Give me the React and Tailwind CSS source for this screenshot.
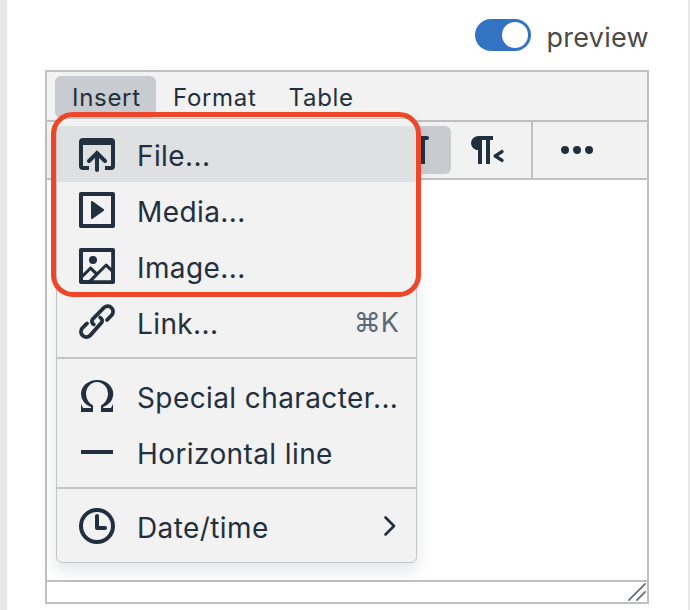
import React from "react";

const textFont = "font-['Inter','Liberation_Sans',sans-serif]";

function Icon({ children }) {
  return (
    <svg viewBox="0 0 24 24" className="w-12 h-12 shrink-0 fill-[#222f3e]">
      {children}
    </svg>
  );
}

const items = [
  {
    label: "File...",
    active: true,
    icon: (
      <>
        <path d="M5 4h14a2 2 0 0 1 2 2v12a2 2 0 0 1-2 2h-3v-2h3V7.5H5V18h3v2H5a2 2 0 0 1-2-2V6a2 2 0 0 1 2-2z" />
        <path d="M12 20V11.5M8 15.5l4-4 4 4" fill="none" stroke="#222f3e" strokeWidth="2" strokeLinecap="round" />
      </>
    ),
  },
  {
    label: "Media...",
    icon: (
      <path d="M4 3h16a1 1 0 0 1 1 1v16a1 1 0 0 1-1 1H4a1 1 0 0 1-1-1V4a1 1 0 0 1 1-1zm1 2v14h14V5H5zm4.8 2.6l5.6 4a.5.5 0 0 1 0 .8l-5.6 4A.5.5 0 0 1 9 16V8a.5.5 0 0 1 .8-.4z" />
    ),
  },
  {
    label: "Image...",
    icon: (
      <path d="M5 15.7l3.3-3.2c.3-.3.7-.3 1 0L12 15l4.1-4c.3-.4.8-.4 1 0l2 1.9V5H5v10.7zM5 18V19h3l2.8-2.9-2-2L5 17.9zm14-3l-2.5-2.4-6.4 6.5H19v-4zM4 3h16c.6 0 1 .4 1 1v16c0 .6-.4 1-1 1H4a1 1 0 0 1-1-1V4c0-.6.4-1 1-1zm6 8a2 2 0 1 0 0-4 2 2 0 0 0 0 4z" />
    ),
  },
  {
    label: "Link...",
    shortcut: "⌘K",
    icon: (
      <path
        d="M10.4 13.2a1.7 1.7 0 0 1-.6-2.6L15.6 4.7a2.7 2.7 0 0 1 3.8 3.8L17 11M13.6 9.8a1.7 1.7 0 0 1 .6 2.6L8.4 18.9a2.7 2.7 0 0 1-3.8-3.8L7 12.7"
        fill="none"
        stroke="#222f3e"
        strokeWidth="1.9"
        strokeLinecap="round"
      />
    ),
  },
  { divider: true },
  {
    label: "Special character...",
    icon: (
      <path d="M15 18h4l1-2v4h-6v-3.3l1.4-1a6 6 0 0 0 1.8-2.9 6.3 6.3 0 0 0-.1-4.1 5.8 5.8 0 0 0-3-3.2c-.6-.3-1.3-.5-2.1-.5a5.1 5.1 0 0 0-3.9 1.8 6.3 6.3 0 0 0-1.3 6 6.2 6.2 0 0 0 1.8 3l1.4.9V20H4v-4l1 2h4v-.5l-2-1L5.4 15A6.5 6.5 0 0 1 4 11c0-1 .2-1.9.6-2.7A7 7 0 0 1 6.3 6C7.1 5.4 8 5 9 4.5c1-.3 2-.5 3.1-.5a8.8 8.8 0 0 1 5.7 2 7 7 0 0 1 1.7 2.3 6 6 0 0 1 .2 4.8c-.2.7-.6 1.3-1 1.9a7.6 7.6 0 0 1-3.6 2.5v.5z" />
    ),
  },
  {
    label: "Horizontal line",
    icon: <path d="M4 11h16v2H4z" />,
  },
  { divider: true },
  {
    label: "Date/time",
    chevron: true,
    icon: (
      <>
        <path d="M12 19a7 7 0 1 0 0-14 7 7 0 0 0 0 14zm0 2a9 9 0 1 1 0-18 9 9 0 0 1 0 18z" />
        <path d="M16 12h-3V7c0-.6-.4-1-1-1a1 1 0 0 0-1 1v6c0 .6.4 1 1 1h4c.6 0 1-.4 1-1s-.4-1-1-1z" />
      </>
    ),
  },
];

function InsertMenu() {
  return (
    <div className="absolute left-[9px] top-[46px] w-[361px] bg-[#f2f2f2] border border-[#c4c4c4] rounded-[6px] pt-[7px] pb-[8px] shadow-[0_8px_16px_rgba(34,47,62,0.12)]">
      {items.map((item, idx) =>
        item.divider ? (
          <div key={idx} className="h-[2px] bg-[#c4c4c4] mt-[7px] mb-[9px]" />
        ) : (
          <div
            key={idx}
            className={`h-14 pl-4 pr-4 flex items-center ${item.active ? "bg-[#dee0e2]" : ""}`}
          >
            <Icon>{item.icon}</Icon>
            <span className="ml-4 pt-[3px] flex-1 text-[28px] tracking-[0.4px] whitespace-nowrap">{item.label}</span>
            {item.shortcut && <span className="pt-[3px] mr-[1px] text-[27px] text-[#5d6978]">{item.shortcut}</span>}
            {item.chevron && (
              <svg viewBox="0 0 14 22" className="w-[14px] h-[22px] mr-[3px]">
                <path d="M2.5 2.5l8.5 8.5-8.5 8.5" fill="none" stroke="#222f3e" strokeWidth="2.6" strokeLinecap="round" strokeLinejoin="round" />
              </svg>
            )}
          </div>
        )
      )}
    </div>
  );
}

export default function App() {
  return (
    <div className={`w-[690px] h-[610px] bg-white border-l-[7px] border-r-[2px] border-[#e8e8e8] overflow-hidden text-[#222f3e] ${textFont}`}>
      {/* preview switch */}
      <div className="h-[70px] pr-[39px] flex items-center justify-end gap-[15px]">
        <div className="w-14 h-8 rounded-full bg-[#3273c4] flex items-center justify-end pr-[3px]">
          <div className="w-[26px] h-[26px] rounded-full bg-white" />
        </div>
        <span className="pt-[6px] text-[27px] text-[#4a4a4a] tracking-[0.3px]">preview</span>
      </div>

      {/* editor */}
      <div className="relative ml-[38px] w-[604px] h-[534px] border-2 border-[#c0c0c0] flex flex-col">
        <div className="h-12 shrink-0 bg-[#f2f2f2] pl-2 pt-1 flex text-[24px] tracking-[0.7px]">
          <div className="h-[42px] w-[101px] pl-[17px] pt-[2px] rounded-[6px] bg-[#c8cbcf] flex items-center">Insert</div>
          <div className="h-[42px] ml-[17px] pt-[2px] flex items-center">Format</div>
          <div className="h-[42px] ml-[32px] pt-[2px] flex items-center">Table</div>
        </div>

        <div className="h-[60px] shrink-0 bg-[#f2f2f2] border-y-2 border-[#c0c0c0] flex">
          <div className="flex-1 flex justify-end items-center gap-[1px] pr-[11px] border-r-2 border-[#c0c0c0]">
            <div className="w-[68px] h-12 rounded-[6px] bg-[#c8cbcf] flex items-center justify-center">
              <Icon>
                <path d="M10 5h7a1 1 0 0 1 0 2h-1v12h-2V7h-2v12h-2v-7c-.5 0-1 0-1.4-.3A3.4 3.4 0 0 1 6.8 10a3.3 3.3 0 0 1 0-2.8 3.4 3.4 0 0 1 1.8-1.8L10 5z" />
              </Icon>
            </div>
            <div className="w-[68px] h-12 flex items-center justify-center">
              <Icon>
                <path d="M8 5h7.5v2H14v12h-2V7h-2v12H8v-7c-.5 0-1 0-1.4-.3A3.4 3.4 0 0 1 4.8 10a3.3 3.3 0 0 1 0-2.8 3.4 3.4 0 0 1 1.8-1.8L8 5z" />
                <path d="M20 12.8l-3.4 2.2 3.4 2.2" fill="none" stroke="#222f3e" strokeWidth="1.7" strokeLinecap="round" strokeLinejoin="round" />
              </Icon>
            </div>
          </div>
          <div className="w-[114px] pl-[20px] flex items-center">
            <Icon>
              <path d="M6 10a2 2 0 0 0-2 2c0 1.1.9 2 2 2a2 2 0 0 0 2-2 2 2 0 0 0-2-2zm12 0a2 2 0 0 0-2 2c0 1.1.9 2 2 2a2 2 0 0 0 2-2 2 2 0 0 0-2-2zm-6 0a2 2 0 0 0-2 2c0 1.1.9 2 2 2a2 2 0 0 0 2-2 2 2 0 0 0-2-2z" />
            </Icon>
          </div>
        </div>

        <div className="flex-1 bg-white" />

        <div className="h-[22px] shrink-0 bg-white border-t-2 border-[#c0c0c0] flex justify-end items-center pr-[1px]">
          <svg viewBox="0 0 18 18" className="w-[18px] h-[18px]">
            <path d="M1 17L17 1M9 17l8-8" fill="none" stroke="#6d7580" strokeWidth="1.8" strokeLinecap="round" />
          </svg>
        </div>

        <InsertMenu />

        {/* red annotation */}
        <div className="absolute left-[4px] top-[40px] w-[370px] h-[185px] border-[5px] border-[#ee4628] rounded-[22px]" />
      </div>
    </div>
  );
}
